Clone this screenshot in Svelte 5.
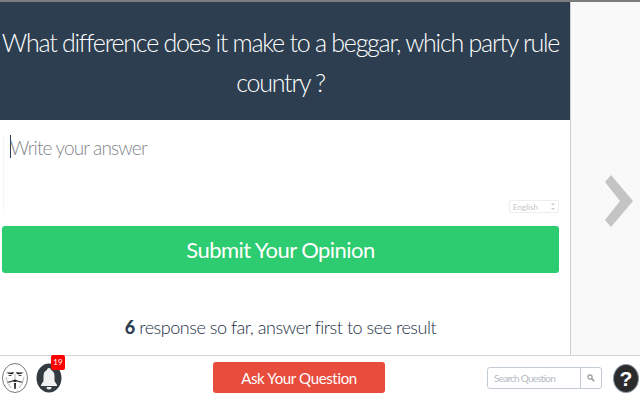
<script>
  const responses = 6;
</script>

<div class="page">
  <div class="main">
    <div class="content">
      <h1 class="question">What difference does it make to a beggar, which party rule country ?</h1>
      <div class="answer">
        <div class="input">
          <span class="caret"></span>
          <span class="placeholder">Write your answer</span>
          <div class="lang">
            <span>English</span>
            <svg width="4" height="9" viewBox="0 0 4 9"><path d="M0 3l2-2 2 2zM0 6l2 2 2-2z" fill="#ccc" /></svg>
          </div>
        </div>
      </div>
      <button class="submit">Submit Your Opinion</button>
      <p class="count"><b>{responses}</b> response so far, answer first to see result</p>
    </div>
    <div class="side">
      <svg class="next" width="28" height="52" viewBox="0 0 28 52">
        <path d="M0 7L6 0 28 26 6 52 0 45 15 26z" fill="#c4c4c4" />
      </svg>
    </div>
  </div>
  <footer class="bar">
    <div class="left">
      <svg class="mask" width="26" height="30" viewBox="0 0 26 30">
        <ellipse cx="13" cy="15" rx="12.500" ry="14.500" fill="#fff" stroke="#555" stroke-width="0.800" />
        <path d="M4 9q2 1 8 0l-1 2q-4 1-7-2zM22 9q-2 1-8 0l1 2q4 1 7-2z" fill="#222" />
        <path d="M6 12.500q2-1 4 0q-2 1-4 0zM20 12.500q-2-1-4 0q2 1 4 0z" fill="#333" />
        <path d="M13 11v6M4 14q1 7 5 11M22 14q-1 7-5 11" fill="none" stroke="#999" stroke-width="0.700" />
        <path d="M5 19q4-1 8-2.500q4 1.500 8 2.500q-2 1-4 0q-2-1-4 0q-2-1-4 0q-2 1-4 0z" fill="#222" />
        <path d="M12 20h2l-.300 6h-1.400z" fill="#222" />
      </svg>
      <div class="bell-wrap">
        <svg width="26" height="30" viewBox="0 0 26 30">
          <ellipse cx="13" cy="15" rx="12.500" ry="14.500" fill="#333b40" />
          <path d="M13 5q2 0 2 2q3.500 1.500 3.500 6v5l2.500 4v1h-16v-1l2.500-4v-5q0-4.500 3.500-6q0-2 2-2z" fill="#f1f1f1" />
          <path d="M10.500 24a2.500 2.500 0 0 0 5 0z" fill="#f1f1f1" />
        </svg>
        <span class="badge">19</span>
      </div>
    </div>
    <button class="ask">Ask Your Question</button>
    <div class="right">
      <div class="search">
        <span class="search-text">Search Question</span>
        <span class="search-btn">
          <svg width="8" height="8" viewBox="0 0 8 8">
            <circle cx="3" cy="3" r="2.100" fill="none" stroke="#999" stroke-width="1.200" />
            <path d="M4.600 4.600L7.300 7.300" stroke="#999" stroke-width="1.500" />
          </svg>
        </span>
      </div>
      <div class="help">?</div>
    </div>
  </footer>
</div>

<style>
  :global(body) {
    margin: 0;
    background: #fff;
  }
  .page {
    width: 640px;
    height: 400px;
    display: flex;
    flex-direction: column;
    overflow: hidden;
    font-family: Lato, "Open Sans", sans-serif;
  }
  .main {
    height: 356px;
    flex: none;
    display: flex;
    border-top: 2px solid #7c7c7c;
    box-sizing: border-box;
    border-bottom: 1px solid #d4d4d4;
  }
  .content {
    width: 570px;
    flex: none;
    border-right: 1px solid #cfcfcf;
  }
  /* the installed Lato runs wider than the one in the shot, hence the tracking */
  .question {
    margin: 0;
    height: 118px;
    box-sizing: border-box;
    padding: 20px 9px 0 0;
    background: #2c3e50;
    color: #fff;
    font-size: 25px;
    font-weight: 300;
    line-height: 40px;
    letter-spacing: -1.25px;
    text-align: center;
  }
  .answer {
    height: 106px;
    box-sizing: border-box;
    padding: 15px 11px 0 3px;
  }
  .input {
    height: 78px;
    padding-left: 6px;
    display: flex;
    align-items: flex-start;
    border-left: 1px solid #f6f6f6;
  }
  .caret {
    width: 1px;
    height: 23px;
    margin-right: -1px;
    background: #2c3e50;
    flex: none;
  }
  .placeholder {
    font-size: 19px;
    font-weight: 300;
    line-height: 26px;
    letter-spacing: -0.85px;
    color: #7f858b;
  }
  .lang {
    align-self: flex-end;
    margin-left: auto;
    width: 50px;
    height: 13px;
    box-sizing: border-box;
    border: 1px solid #eee;
    border-radius: 2px;
    padding: 0 3px;
    display: flex;
    align-items: center;
    justify-content: space-between;
    font-size: 8px;
    color: #c4c4c4;
  }
  .submit {
    display: block;
    width: 557px;
    height: 47px;
    margin: 0 0 0 2px;
    border: 0;
    border-radius: 3px;
    background: #2ecc71;
    color: #fff;
    font-family: inherit;
    font-size: 22px;
    font-weight: 400;
    letter-spacing: -0.55px;
  }
  .count {
    margin: 42px 0 0;
    font-size: 18px;
    font-weight: 300;
    line-height: 24px;
    letter-spacing: -0.47px;
    text-align: center;
    color: #1d3045;
    padding-right: 9px;
  }
  .count b {
    font-weight: 900;
    color: #2c3e50;
  }
  .side {
    flex: 1;
    background: #f9f9f9;
    display: flex;
    align-items: flex-start;
    padding: 173px 0 0 34px;
  }
  .bar {
    flex: 1;
    display: flex;
    align-items: center;
    padding: 0 0 0 2px;
    background: #fff;
  }
  .left {
    width: 211px;
    flex: none;
    display: flex;
    align-items: center;
    gap: 8px;
  }
  .bell-wrap {
    position: relative;
    display: flex;
  }
  .badge {
    position: absolute;
    top: -8px;
    right: -3px;
    width: 14px;
    height: 15px;
    border-radius: 2px;
    background: #f00;
    color: #fff;
    font-size: 8px;
    line-height: 15px;
    text-align: center;
  }
  .ask {
    width: 172px;
    height: 31px;
    margin-bottom: 1px;
    border: 0;
    border-radius: 3px;
    background: #e74c3c;
    color: #fff;
    font-family: inherit;
    font-size: 15px;
    letter-spacing: -0.35px;
    padding: 0;
  }
  .right {
    display: flex;
    align-items: center;
    gap: 11px;
    margin-left: auto;
  }
  .search {
    width: 115px;
    height: 22px;
    box-sizing: border-box;
    border: 1px solid #c3ccd4;
    border-radius: 3px;
    display: flex;
    align-items: center;
    font-size: 10px;
    letter-spacing: -0.75px;
    color: #b4bcc4;
  }
  .search-text {
    flex: 1;
    padding-left: 6px;
  }
  .search-btn {
    width: 20px;
    height: 100%;
    border-left: 1px solid #c3ccd4;
    display: flex;
    align-items: center;
    justify-content: center;
  }
  .help {
    width: 26px;
    height: 29px;
    flex: none;
    border-radius: 50%;
    background: #2b2b2b;
    border: 1px solid #8c99a6;
    box-sizing: border-box;
    margin-right: 1px;
    color: #fff;
    font-family: "Liberation Sans", sans-serif;
    font-size: 21px;
    font-weight: 700;
    line-height: 27px;
    text-align: center;
  }
</style>
